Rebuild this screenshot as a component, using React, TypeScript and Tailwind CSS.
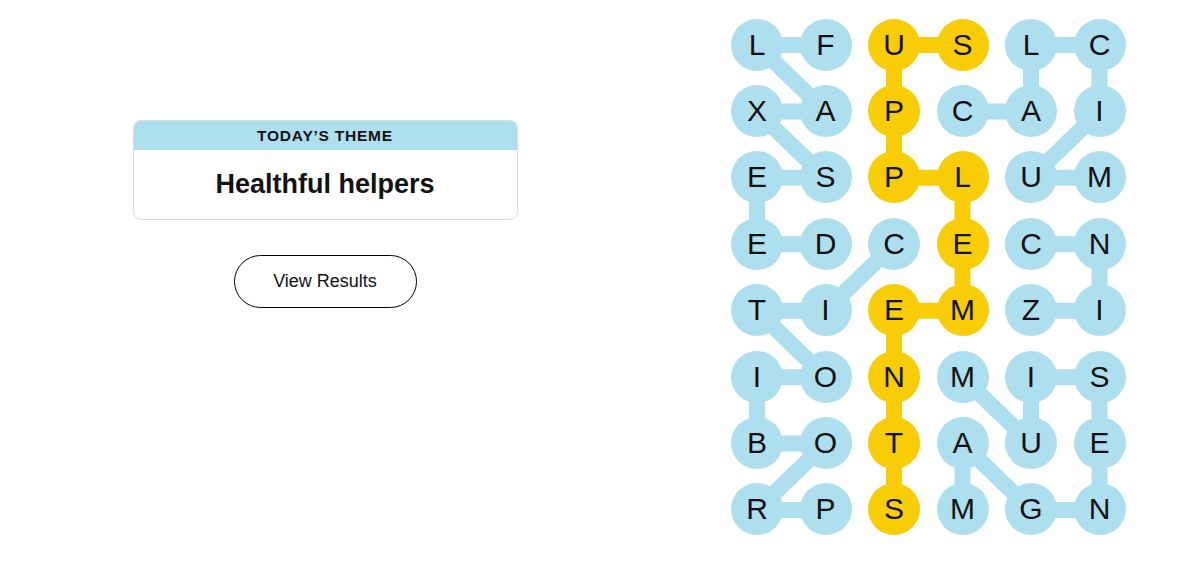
import React from "react";

const BLUE = "#aedfee";
const YELLOW = "#f8cd05";

const rows = [
  "LFUSLC",
  "XAPCAI",
  "ESPLUM",
  "EDCECN",
  "TIEMZI",
  "IONMIS",
  "BOTAUE",
  "RPSMGN",
];

const yellowCells = new Set([
  "0,3", "0,2", "1,2", "2,2", "2,3", "3,3", "4,3", "4,2", "5,2", "6,2", "7,2",
]);

type Link = [number, number, number, number];

const blueLinks: Link[] = [
  [0, 0, 0, 1], [0, 0, 1, 1], [1, 0, 1, 1], [1, 0, 2, 1], [2, 0, 2, 1], [2, 0, 3, 0], [3, 0, 3, 1],
  [3, 2, 4, 1], [4, 0, 4, 1], [4, 0, 5, 1], [5, 0, 5, 1], [5, 0, 6, 0], [6, 0, 6, 1], [6, 1, 7, 0], [7, 0, 7, 1],
  [1, 3, 1, 4], [1, 4, 0, 4], [0, 4, 0, 5], [0, 5, 1, 5], [1, 5, 2, 4], [2, 4, 2, 5],
  [4, 4, 4, 5], [4, 5, 3, 5], [3, 5, 3, 4],
  [7, 3, 6, 3], [6, 3, 7, 4], [7, 4, 7, 5], [7, 5, 6, 5], [6, 5, 5, 5], [5, 5, 5, 4], [5, 4, 6, 4], [6, 4, 5, 3],
];

const yellowLinks: Link[] = [
  [0, 3, 0, 2], [0, 2, 1, 2], [1, 2, 2, 2], [2, 2, 2, 3], [2, 3, 3, 3], [3, 3, 4, 3], [4, 3, 4, 2], [4, 2, 5, 2], [5, 2, 6, 2], [6, 2, 7, 2],
];

const CX = (c: number) => 26 + c * 68.5;
const CY = (r: number) => 26 + r * 66.43;

function Board() {
  return (
    <div className="relative w-[394.5px] h-[517px]">
      <svg className="absolute inset-0" width="394.5" height="517" viewBox="0 0 394.5 517">
        {blueLinks.map(([r1, c1, r2, c2], i) => (
          <line key={"b" + i} x1={CX(c1)} y1={CY(r1)} x2={CX(c2)} y2={CY(r2)} stroke={BLUE} strokeWidth={16} />
        ))}
        {yellowLinks.map(([r1, c1, r2, c2], i) => (
          <line key={"y" + i} x1={CX(c1)} y1={CY(r1)} x2={CX(c2)} y2={CY(r2)} stroke={YELLOW} strokeWidth={16} />
        ))}
      </svg>
      <div className="relative grid grid-cols-[repeat(6,52px)] gap-x-[16.5px] gap-y-[14.43px]">
        {rows.flatMap((row, r) =>
          row.split("").map((ch, c) => (
            <div
              key={r + "-" + c}
              className={
                "w-[52px] h-[52px] rounded-full flex items-center justify-center text-[30px] leading-none text-[#121212] " +
                (yellowCells.has(r + "," + c) ? "bg-[#f8cd05]" : "bg-[#aedfee]")
              }
            >
              {ch}
            </div>
          ))
        )}
      </div>
    </div>
  );
}

export default function App() {
  return (
    <div className="w-[1200px] h-[581px] bg-white flex font-['Liberation_Sans',Arial,sans-serif] text-[#121212]">
      <div className="w-[650px] pt-[120px] flex flex-col items-center">
        <div className="w-[385px] rounded-[8px] border border-[#dcdcdc] overflow-hidden">
          <div className="h-[29px] bg-[#aedfee] flex items-center justify-center text-[15.5px] font-bold tracking-[0.05em]">
            TODAY’S THEME
          </div>
          <div className="h-[69px] flex items-center justify-center text-[27px] font-bold">
            Healthful helpers
          </div>
        </div>
        <button className="mt-[35px] w-[183px] h-[53px] rounded-full border border-black flex items-center justify-center text-[18px] text-[#121212]">
          View Results
        </button>
      </div>
      <div className="pl-[81px] pt-[18.5px]">
        <Board />
      </div>
    </div>
  );
}
